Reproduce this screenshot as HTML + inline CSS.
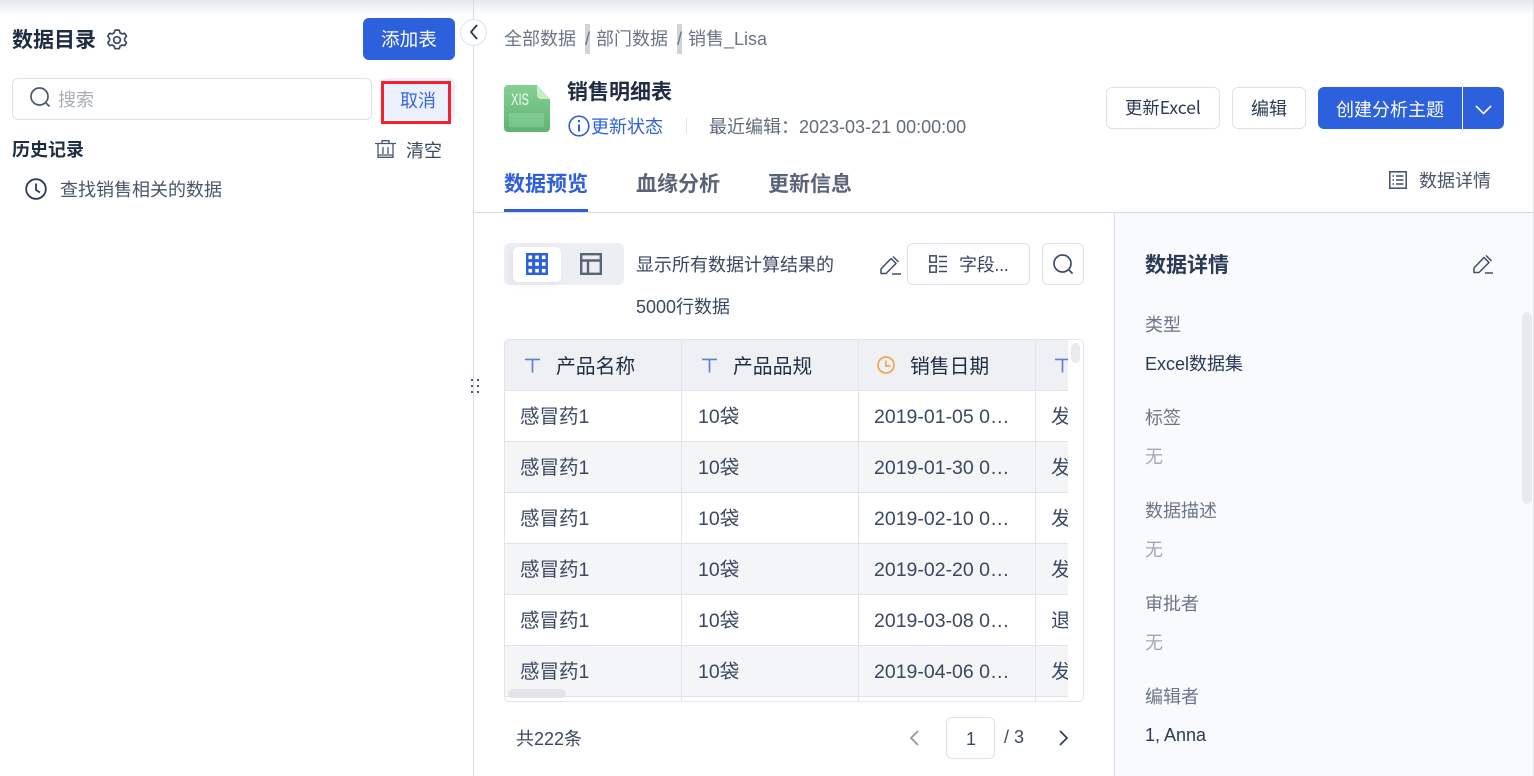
<!DOCTYPE html>
<html lang="zh"><head><meta charset="utf-8"><title>数据目录</title>
<style>
*{box-sizing:border-box}
html,body{margin:0;padding:0;width:1534px;height:776px;overflow:hidden;background:#fff}
body{position:relative;font-family:"Liberation Sans","Noto Sans CJK SC",sans-serif;font-size:18px;color:#2b3a55}
.a{position:absolute}
.t{position:absolute;white-space:nowrap;line-height:24px;height:24px}
.b{font-weight:700;color:#1f2d44}
.btn{position:absolute;border:1px solid #dfe1ea;border-radius:6px;background:#fff}
svg{position:absolute;overflow:visible;fill:none}
.row{position:absolute;left:1px;width:563px;height:51px;border-bottom:1px solid #e2e4ea;background:#fff}
.row.g{background:#f4f5f7}
.row .t{top:14px;color:#3b4862;font-size:19.5px}
.cl{position:absolute;top:0;width:1px;height:363px;background:#e2e4ea}
.lab{color:#6b7587}.non{color:#a1a8b5}
</style></head><body>

<div class="a" style="left:0;top:0;width:1534px;height:16px;background:linear-gradient(#e6e7ea,#f6f7f8 60%,#fff)"></div>
<div class="a" style="left:473px;top:0;width:1px;height:776px;background:#d8dbe6"></div>
<div class="a" style="left:1533px;top:0;width:1px;height:776px;background:#dfe1e8"></div>

<!-- left panel -->
<div class="t b" style="left:12px;top:29px;font-size:21px">数据目录</div>
<svg style="left:107px;top:30px" width="20" height="20" viewBox="1 1 18 18" stroke="#3a4a63" stroke-width="1.500"><path d="M10 1l2 .2.8 2.300 1.700 1 2.400-.5 1.600 2.700-1.600 1.800v2l1.600 1.800-1.600 2.700-2.400-.5-1.700 1-.8 2.300H8.200l-.8-2.300-1.700-1-2.400.5-1.600-2.700 1.600-1.800v-2L1.700 6.700l1.600-2.700 2.400.5 1.700-1 .8-2.300z" stroke-linejoin="round"/><circle cx="10" cy="10" r="3"/></svg>
<div class="a" style="left:363px;top:18px;width:92px;height:42px;border-radius:6px;background:#2d60dc"></div>
<div class="t" style="left:381px;top:28px;color:#fff;font-size:18.6px">添加表</div>
<div class="a" style="left:460px;top:19px;width:27px;height:27px;border-radius:50%;background:#fff;border:1px solid #dfe1ea"></div>
<svg style="left:469px;top:24px" width="10" height="16" viewBox="0 0 10 16" stroke="#2b3a55" stroke-width="1.800"><path d="M8 1L2 8l6 7"/></svg>

<div class="btn" style="left:12px;top:78px;width:360px;height:42px;border-color:#dcdfe6"></div>
<svg style="left:30px;top:87px" width="21" height="21" viewBox="0 0 21 21" stroke="#4a5870" stroke-width="1.700"><circle cx="9.500" cy="9.500" r="8.500"/><path d="M15.500 15.500l4 4"/></svg>
<div class="t" style="left:58px;top:88px;color:#a8adb8">搜索</div>
<div class="a" style="left:382px;top:78px;width:73px;height:42px;background:#eaf0fd;border-radius:6px"></div>
<div class="a" style="left:381px;top:81px;width:70px;height:43px;border:3px solid #f5222d"></div>
<div class="t" style="left:400px;top:89px;color:#3a66dd">取消</div>

<div class="t b" style="left:12px;top:138px">历史记录</div>
<svg style="left:375px;top:140px" width="21" height="18" viewBox="0 0 21 18" stroke="#4a5870" stroke-width="1.300"><path d="M0 3.500h21M7 3V.7h7V3M3 4v13.300h15V4M8 7v7M13 7v7M3 15h15"/></svg>
<div class="t" style="left:406px;top:139px;color:#3b4862">清空</div>
<svg style="left:25px;top:178px" width="22" height="22" viewBox="0 0 22 22" stroke="#2b3a55" stroke-width="1.800"><circle cx="11" cy="11" r="9.800"/><path d="M11 5.500V12l4 2.500"/></svg>
<div class="t" style="left:60px;top:178px;color:#4a5568">查找销售相关的数据</div>

<!-- drag handle -->
<svg style="left:470px;top:378px" width="12" height="16"><g fill="#4a5870"><rect x="1" y="1" width="2" height="2"/><rect x="7" y="1" width="2" height="2"/><rect x="1" y="7" width="2" height="2"/><rect x="7" y="7" width="2" height="2"/><rect x="1" y="13" width="2" height="2"/><rect x="7" y="13" width="2" height="2"/></g></svg>

<!-- breadcrumb -->
<div class="a" style="left:585px;top:24px;width:5px;height:30px;background:#d0d3da"></div>
<div class="a" style="left:677px;top:24px;width:5px;height:30px;background:#d0d3da"></div>
<div class="t" style="left:504px;top:27px;color:#6b7587">全部数据</div>
<div class="t" style="left:585px;top:27px;color:#6b7587">/</div>
<div class="t" style="left:596px;top:27px;color:#6b7587">部门数据</div>
<div class="t" style="left:677px;top:27px;color:#6b7587">/</div>
<div class="t" style="left:688px;top:27px;color:#6b7587">销售_Lisa</div>

<!-- xls icon -->
<svg style="left:504px;top:85px" width="46" height="47" viewBox="0 0 46 47">
<defs><linearGradient id="g" x1="0" y1="0" x2="0" y2="1"><stop offset="0" stop-color="#86d094"/><stop offset="1" stop-color="#5db471"/></linearGradient></defs>
<path d="M4 0h29l13 14v29a4 4 0 0 1-4 4H4a4 4 0 0 1-4-4V4a4 4 0 0 1 4-4z" fill="url(#g)"/>
<path d="M33 0l13 14H37a4 4 0 0 1-4-4z" fill="#c9edc9"/>
<path d="M5 28h35v14H5z" fill="#9ad4a6" opacity=".45"/>
<path d="M5 32.500h35M5 37.500h35M16.500 28v14M28 28v14" stroke="#7cc48c" stroke-width="1" opacity=".7"/>
<text x="7" y="20" font-family="Liberation Sans" font-size="17" fill="#f4fbf5" textLength="18" lengthAdjust="spacingAndGlyphs">XIS</text>
</svg>
<div class="t b" style="left:567px;top:81px;font-size:21px">销售明细表</div>
<svg style="left:568px;top:115px" width="22" height="22" viewBox="0 0 22 22" stroke="#2f5fdb" stroke-width="1.600"><circle cx="11" cy="11" r="9.800"/><path d="M11 9.500v7" stroke-width="2"/><path d="M11 5v2.200" stroke-width="2"/></svg>
<div class="t" style="left:591px;top:115px;color:#2f5fdb">更新状态</div>
<div class="a" style="left:686px;top:118px;width:1px;height:16px;background:#dfe1ea"></div>
<div class="t" style="left:709px;top:115px;color:#626b7c">最近编辑：2023-03-21 00:00:00</div>

<div class="btn" style="left:1106px;top:87px;width:114px;height:42px"></div>
<div class="t" style="left:1125px;top:96px;color:#2b3a55;font-size:17.4px;font-family:'Noto Sans CJK SC',sans-serif">更新Excel</div>
<div class="btn" style="left:1232px;top:87px;width:74px;height:42px"></div>
<div class="t" style="left:1251px;top:97px;color:#2b3a55">编辑</div>
<div class="a" style="left:1318px;top:87px;width:186px;height:42px;background:#2d60dc;border-radius:6px"></div>
<div class="a" style="left:1462px;top:87px;width:1px;height:42px;background:#fff"></div>
<div class="t" style="left:1336px;top:98px;color:#fff">创建分析主题</div>
<svg style="left:1475px;top:105px" width="17" height="10" viewBox="0 0 17 10" stroke="#fff" stroke-width="1.600"><path d="M1 1l7.500 7.500L16 1"/></svg>

<!-- tabs -->
<div class="t" style="left:504px;top:173px;font-size:21px;font-weight:700;color:#2f5fdb">数据预览</div>
<div class="t" style="left:636px;top:173px;font-size:21px;font-weight:700;color:#5a6478">血缘分析</div>
<div class="t" style="left:768px;top:173px;font-size:21px;font-weight:700;color:#5a6478">更新信息</div>
<div class="a" style="left:474px;top:212px;width:1060px;height:1px;background:#d8dbe6"></div>
<div class="a" style="left:504px;top:209px;width:84px;height:3px;background:#2f5fdb"></div>
<svg style="left:1389px;top:171px" width="18" height="18" viewBox="0 0 18 18" stroke="#3f4d66" stroke-width="1.500"><rect x=".8" y=".8" width="16.400" height="16.400"/><path d="M3.500 5h1.500M7 5h7.500M3.500 9h1.500M7 9h7.500M3.500 13h1.500M7 13h7.500"/></svg>
<div class="t" style="left:1419px;top:169px;color:#4a5568">数据详情</div>

<!-- right panel -->
<div class="a" style="left:1114px;top:213px;width:419px;height:563px;background:#f9fafe;border-left:1px solid #d8dbe6"></div>
<div class="a" style="left:1522px;top:312px;width:10px;height:192px;border-radius:5px;background:#e8eaee"></div>
<div class="t b" style="left:1145px;top:254px;font-size:21px;color:#2b3a55">数据详情</div>
<svg style="left:1473px;top:254px" width="20" height="20" viewBox="0 0 20 20" stroke="#3f4d66" stroke-width="1.500"><path d="M1 14L11 3.500l5 5L6 18.500H1zM13 1.500l5.500 5.500M12 19h8" stroke-linejoin="round"/></svg>
<div class="t lab" style="left:1145px;top:313px">类型</div>
<div class="t" style="left:1145px;top:352px;color:#2b3a55">Excel数据集</div>
<div class="t lab" style="left:1145px;top:406px">标签</div>
<div class="t non" style="left:1145px;top:445px">无</div>
<div class="t lab" style="left:1145px;top:499px">数据描述</div>
<div class="t non" style="left:1145px;top:538px">无</div>
<div class="t lab" style="left:1145px;top:592px">审批者</div>
<div class="t non" style="left:1145px;top:631px">无</div>
<div class="t lab" style="left:1145px;top:685px">编辑者</div>
<div class="t" style="left:1145px;top:723px;color:#2b3a55">1, Anna</div>

<!-- toolbar -->
<div class="a" style="left:504px;top:243px;width:120px;height:42px;border-radius:6px;background:#edeef2"></div>
<div class="a" style="left:513px;top:247px;width:48px;height:35px;border-radius:5px;background:#fff;box-shadow:-3px 2px 8px rgba(0,0,0,.05)"></div>
<svg style="left:526px;top:253px" width="22" height="22" viewBox="0 0 22 22"><rect width="22" height="22" fill="#2f5fdb"/><g fill="#fff"><rect x="2.500" y="2.500" width="3.600" height="3.600"/><rect x="9.200" y="2.500" width="3.600" height="3.600"/><rect x="15.900" y="2.500" width="3.600" height="3.600"/><rect x="2.500" y="9.200" width="3.600" height="3.600"/><rect x="9.200" y="9.200" width="3.600" height="3.600"/><rect x="15.900" y="9.200" width="3.600" height="3.600"/><rect x="2.500" y="15.900" width="3.600" height="3.600"/><rect x="9.200" y="15.900" width="3.600" height="3.600"/><rect x="15.900" y="15.900" width="3.600" height="3.600"/></g></svg>
<svg style="left:580px;top:253px" width="22" height="22" viewBox="0 0 22 22" stroke="#5a6478" stroke-width="2.400"><rect x="1.200" y="1.200" width="19.600" height="19.600"/><path d="M1 7.500h20M8 7.500v13"/></svg>
<div class="t" style="left:636px;top:253px;color:#3b4862">显示所有数据计算结果的</div>
<div class="t" style="left:636px;top:295px;color:#3b4862">5000行数据</div>
<svg style="left:880px;top:255px" width="21" height="20" viewBox="0 0 21 20" stroke="#3f4d66" stroke-width="1.500"><path d="M1 14L11 3.500l5 5L6 18.500H1zM13 1.500l5.500 5.500M12 19h9" stroke-linejoin="round"/></svg>
<div class="btn" style="left:907px;top:243px;width:123px;height:42px"></div>
<svg style="left:929px;top:255px" width="18" height="18" viewBox="0 0 18 18" stroke="#3f4d66" stroke-width="1.500"><rect x=".8" y=".8" width="6.400" height="6.400"/><rect x=".8" y="10.800" width="6.400" height="6.400"/><path d="M10 1.500h8M10 6.500h8M10 11.500h8M10 16.500h8"/></svg>
<div class="t" style="left:959px;top:253px;color:#3b4862;letter-spacing:-.3px">字段...</div>
<div class="btn" style="left:1042px;top:243px;width:42px;height:42px"></div>
<svg style="left:1053px;top:254px" width="21" height="21" viewBox="0 0 21 21" stroke="#3f4d66" stroke-width="1.700"><circle cx="9.500" cy="9.500" r="8.500"/><path d="M15.500 15.500l4 4"/></svg>

<!-- table -->
<div class="a" style="left:504px;top:339px;width:580px;height:363px;border:1px solid #e2e4ea;border-radius:5px;overflow:hidden;background:#fff">
  <div class="a" style="left:0;top:0;width:563px;height:51px;background:#eef0f4;border-bottom:1px solid #e2e4ea"></div>
  <div class="row" style="left:0;top:51px"><div class="t" style="left:15px">感冒药1</div><div class="t" style="left:193px">10袋</div><div class="t" style="left:369px">2019-01-05 0…</div><div class="t" style="left:546px">发</div></div>
  <div class="row g" style="left:0;top:102px"><div class="t" style="left:15px">感冒药1</div><div class="t" style="left:193px">10袋</div><div class="t" style="left:369px">2019-01-30 0…</div><div class="t" style="left:546px">发</div></div>
  <div class="row" style="left:0;top:153px"><div class="t" style="left:15px">感冒药1</div><div class="t" style="left:193px">10袋</div><div class="t" style="left:369px">2019-02-10 0…</div><div class="t" style="left:546px">发</div></div>
  <div class="row g" style="left:0;top:204px"><div class="t" style="left:15px">感冒药1</div><div class="t" style="left:193px">10袋</div><div class="t" style="left:369px">2019-02-20 0…</div><div class="t" style="left:546px">发</div></div>
  <div class="row" style="left:0;top:255px"><div class="t" style="left:15px">感冒药1</div><div class="t" style="left:193px">10袋</div><div class="t" style="left:369px">2019-03-08 0…</div><div class="t" style="left:546px">退</div></div>
  <div class="row g" style="left:0;top:306px"><div class="t" style="left:15px">感冒药1</div><div class="t" style="left:193px">10袋</div><div class="t" style="left:369px">2019-04-06 0…</div><div class="t" style="left:546px">发</div></div>
  <div class="cl" style="left:176px"></div><div class="cl" style="left:353px"></div><div class="cl" style="left:530px"></div>
  <svg style="left:20px;top:18px" width="15" height="15" viewBox="0 0 16 15" stroke="#5f7fd0" stroke-width="1.800"><path d="M0 1h16M8 1v14"/></svg>
  <div class="t" style="left:51px;top:15px;font-size:19.8px;color:#1f2d44">产品名称</div>
  <svg style="left:197px;top:18px" width="15" height="15" viewBox="0 0 16 15" stroke="#5f7fd0" stroke-width="1.800"><path d="M0 1h16M8 1v14"/></svg>
  <div class="t" style="left:228px;top:15px;font-size:19.8px;color:#1f2d44">产品品规</div>
  <svg style="left:372px;top:16px" width="18" height="18" viewBox="0 0 18 18" stroke="#f0a650" stroke-width="1.700"><circle cx="9" cy="9" r="8"/><path d="M9 4.500V10h4.500"/></svg>
  <div class="t" style="left:405px;top:15px;font-size:19.8px;color:#1f2d44">销售日期</div>
  <svg style="left:550px;top:18px" width="15" height="15" viewBox="0 0 16 15" stroke="#5f7fd0" stroke-width="1.800"><path d="M0 1h16M8 1v14"/></svg>
  <div class="a" style="left:563px;top:0;width:16px;height:363px;background:#fff"></div>
  <div class="a" style="left:566px;top:3px;width:9px;height:20px;border-radius:5px;background:#e8eaee"></div>
  <div class="a" style="left:3px;top:349px;width:58px;height:9px;border-radius:5px;background:#e3e4e8"></div>
</div>

<!-- pagination -->
<div class="t" style="left:516px;top:727px;color:#3b4862">共222条</div>
<svg style="left:909px;top:730px" width="10" height="16" viewBox="0 0 10 16" stroke="#8d95a3" stroke-width="1.700"><path d="M9 1L2 8l7 7"/></svg>
<div class="btn" style="left:946px;top:717px;width:49px;height:42px"></div>
<div class="t" style="left:966px;top:727px;color:#3b4862">1</div>
<div class="t" style="left:1004px;top:725px;color:#3b4862">/ 3</div>
<svg style="left:1059px;top:730px" width="10" height="16" viewBox="0 0 10 16" stroke="#2b3a55" stroke-width="1.700"><path d="M1 1l7 7-7 7"/></svg>

</body></html>
